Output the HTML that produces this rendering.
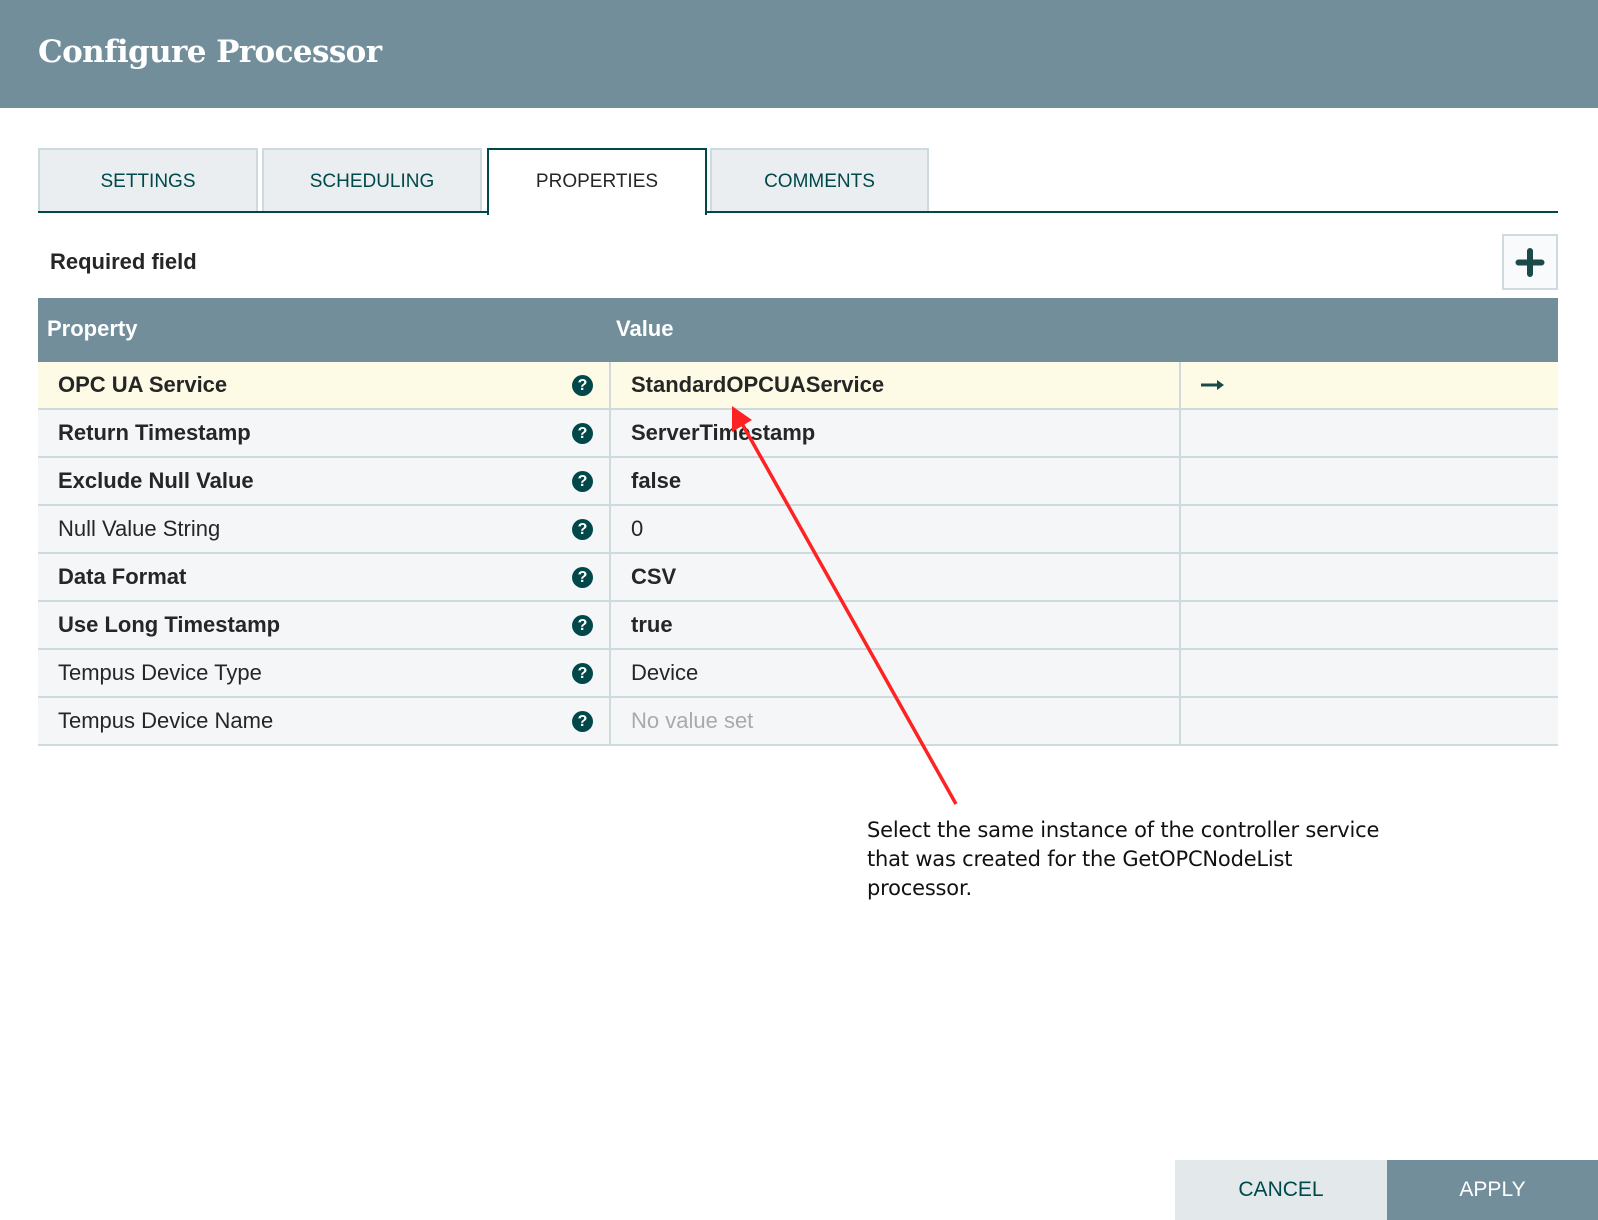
<!DOCTYPE html>
<html><head><meta charset="utf-8"><style>
*{box-sizing:border-box;margin:0;padding:0}
body{width:1598px;height:1220px;background:#fff;position:relative;overflow:hidden;font-family:"Liberation Sans",sans-serif;color:#262626}
.hdr{position:absolute;left:0;top:0;width:1598px;height:108px;background:#728e9b}
.hdr h1{position:absolute;left:38px;top:34px;font-family:"DejaVu Serif",serif;font-size:31px;color:#fff;font-weight:bold;letter-spacing:-0.6px}
.tab{position:absolute;top:148px;height:65px;background:#eaeef0;border:2px solid #cfdadf;border-bottom:none;color:#004849;font-size:19px;text-align:center;line-height:64px}
.tab.act{background:#fff;border:2px solid #004849;border-bottom:none;color:#262626;height:67px}
.tline{position:absolute;top:211px;height:2px;background:#004849}
.req{position:absolute;left:50px;top:249px;font-size:22px;font-weight:bold}
.plus{position:absolute;left:1502px;top:234px;width:56px;height:56px;border:2px solid #cfdadf;background:#f8fafb}
.th{position:absolute;left:38px;top:298px;width:1520px;height:64px;background:#728e9b;color:#fff;font-weight:bold;font-size:22px}
.row{position:absolute;left:38px;width:1520px;height:48px;background:#f4f6f7;border-bottom:2px solid #cfdadf;font-size:22px}
.row div{position:absolute;top:0;height:46px;line-height:46px}
.c1{left:20px}
.q{left:534px;top:13px!important;width:21px;height:21px!important;border-radius:50%;background:#004849;color:#fff;font-size:16px;font-weight:bold;text-align:center;line-height:21px!important}
.v1{left:571px;border-left:2px solid #cfdadf;width:570px;height:48px!important;top:0}
.v{left:593px}
.v2{left:1141px;border-left:2px solid #cfdadf;height:48px!important}
.b{font-weight:bold}
.note{position:absolute;left:867px;top:816px;font-family:"DejaVu Sans",sans-serif;font-size:21px;line-height:29px;color:#111;letter-spacing:-0.2px}
.btn{position:absolute;top:1160px;height:60px;font-size:21px;text-align:center;line-height:60px}
</style></head><body>
<div class="hdr"><h1>Configure Processor</h1></div>
<div class="tab" style="left:38px;width:220px">SETTINGS</div>
<div class="tab" style="left:262px;width:220px">SCHEDULING</div>
<div class="tline" style="left:38px;width:450px"></div>
<div class="tab act" style="left:487px;width:220px">PROPERTIES</div>
<div class="tab" style="left:710px;width:219px">COMMENTS</div>
<div class="tline" style="left:706px;width:852px"></div>
<div class="req">Required field</div>
<div class="plus"><svg width="52" height="52" viewBox="0 0 52 52"><path d="M26 15v23M14.5 26.5h23" stroke="#1a4a4a" stroke-width="6" stroke-linecap="round"/></svg></div>
<div class="th"><span style="position:absolute;left:9px;top:18px">Property</span><span style="position:absolute;left:578px;top:18px">Value</span></div>

<div class="row" style="top:362px;background:#fdfbe5"><div class="c1 b">OPC UA Service</div><div class="q">?</div><div class="v1"></div><div class="v b">StandardOPCUAService</div><div class="v2"></div><div style="left:1162px"><svg width="26" height="46" viewBox="0 0 26 46"><path d="M1 23h18" stroke="#1a4a4a" stroke-width="3"/><path d="M17 18l7 5-7 5z" fill="#1a4a4a"/></svg></div></div>
<div class="row" style="top:410px"><div class="c1 b">Return Timestamp</div><div class="q">?</div><div class="v1"></div><div class="v b">ServerTimestamp</div><div class="v2"></div></div>
<div class="row" style="top:458px"><div class="c1 b">Exclude Null Value</div><div class="q">?</div><div class="v1"></div><div class="v b">false</div><div class="v2"></div></div>
<div class="row" style="top:506px"><div class="c1">Null Value String</div><div class="q">?</div><div class="v1"></div><div class="v">0</div><div class="v2"></div></div>
<div class="row" style="top:554px"><div class="c1 b">Data Format</div><div class="q">?</div><div class="v1"></div><div class="v b">CSV</div><div class="v2"></div></div>
<div class="row" style="top:602px"><div class="c1 b">Use Long Timestamp</div><div class="q">?</div><div class="v1"></div><div class="v b">true</div><div class="v2"></div></div>
<div class="row" style="top:650px"><div class="c1">Tempus Device Type</div><div class="q">?</div><div class="v1"></div><div class="v">Device</div><div class="v2"></div></div>
<div class="row" style="top:698px"><div class="c1">Tempus Device Name</div><div class="q">?</div><div class="v1"></div><div class="v" style="color:#aaa">No value set</div><div class="v2"></div></div>

<svg style="position:absolute;left:0;top:0" width="1598" height="1220">
<line x1="956" y1="804" x2="740" y2="420" stroke="#f22" stroke-width="3.5"/>
<polygon points="732,406 732,432 752,420" fill="#f22"/>
</svg>
<div class="note">Select the same instance of the controller service<br>that was created for the GetOPCNodeList<br>processor.</div>
<div class="btn" style="left:1175px;width:212px;background:#e3e8eb;color:#004849">CANCEL</div>
<div class="btn" style="left:1387px;width:211px;background:#728e9b;color:#fff">APPLY</div>
</body></html>
